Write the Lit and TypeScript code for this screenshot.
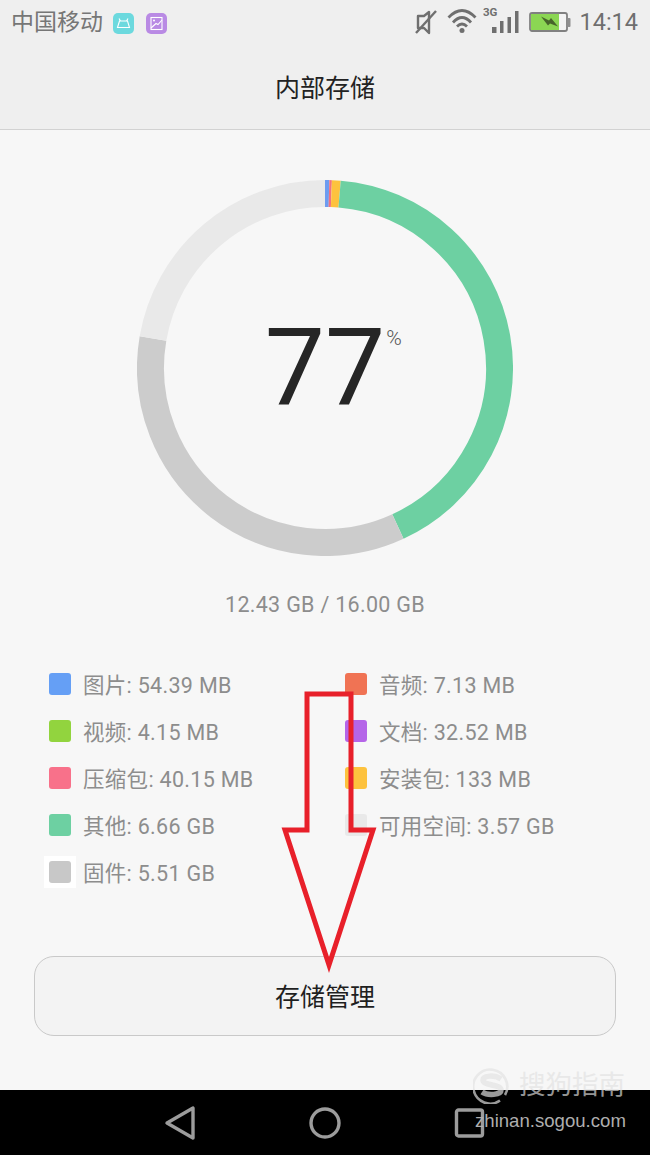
import { LitElement, html, css, svg } from "lit";
import { customElement } from "lit/decorators.js";

const R = 174.5;
const C = 188;
function arc(a0: number, a1: number) {
  const p = (a: number) => {
    const t = (a * Math.PI) / 180;
    return `${(C + R * Math.sin(t)).toFixed(2)} ${(C - R * Math.cos(t)).toFixed(2)}`;
  };
  return `M${p(a0)} A${R} ${R} 0 ${a1 - a0 > 180 ? 1 : 0} 1 ${p(a1)}`;
}

const segments: [number, number, string][] = [
  [0, 1.3, "#6d9cf0"],
  [1.3, 2.1, "#f2727f"],
  [2.1, 4.8, "#fdc23e"],
  [4.8, 155.3, "#6dd0a2"],
  [155.3, 279.7, "#cccccc"],
  [279.7, 360, "#e9e9e9"],
];

const legend: { color: string; label: string; halo?: boolean }[] = [
  { color: "#659ff5", label: "图片: 54.39 MB" },
  { color: "#f07354", label: "音频: 7.13 MB" },
  { color: "#92d43e", label: "视频: 4.15 MB" },
  { color: "#b565e8", label: "文档: 32.52 MB" },
  { color: "#f8718a", label: "压缩包: 40.15 MB" },
  { color: "#fdc23e", label: "安装包: 133 MB" },
  { color: "#6dd0a2", label: "其他: 6.66 GB" },
  { color: "#e9e9e9", label: "可用空间: 3.57 GB" },
  { color: "#c8c8c8", label: "固件: 5.51 GB", halo: true },
];

@customElement("app-root")
export class AppRoot extends LitElement {
  static styles = css`
    :host {
      display: block;
      position: relative;
      width: 650px;
      height: 1155px;
      overflow: hidden;
      background: #f7f7f7;
      font-family: Roboto, "Noto Sans CJK SC", sans-serif;
    }
    .top {
      background: #efefef;
      border-bottom: 1px solid #d2d2d2;
      height: 129px;
      display: flex;
      flex-direction: column;
    }
    .status {
      height: 46px;
      display: flex;
      align-items: center;
      padding: 0 12px;
      color: #757575;
    }
    .carrier {
      font-size: 23px;
      line-height: 46px;
      color: #767676;
      margin-left: -1px;
    }
    .appicon {
      margin-left: 10px;
      display: block;
    }
    .appicon + .appicon {
      margin-left: 12px;
    }
    .spacer {
      flex: 1;
    }
    .sicon {
      display: block;
    }
    .gap-wifi {
      margin-left: 10px;
    }
    .gap-signal {
      margin-left: 6px;
    }
    .gap-battery {
      margin-left: 10px;
    }
    .time {
      font-size: 23.5px;
      margin-left: 8px;
      color: #6f6f6f;
      padding-bottom: 2px;
    }
    .title {
      flex: 1;
      display: flex;
      align-items: center;
      justify-content: center;
      font-size: 25px;
      color: #222;
      padding-bottom: 3px;
    }
    .main {
      height: 960px;
      display: flex;
      flex-direction: column;
      align-items: center;
    }
    .donut {
      margin-top: 50px;
      position: relative;
      width: 376px;
      height: 376px;
      display: flex;
      align-items: center;
      justify-content: center;
    }
    .donut svg {
      position: absolute;
      inset: 0;
    }
    .pct {
      position: relative;
      font-size: 107px;
      font-weight: 400;
      color: #262626;
      line-height: 1;
    }
    .pct small {
      position: absolute;
      left: 100%;
      top: 13px;
      margin-left: 1px;
      font-size: 21px;
      font-weight: 300;
      color: #555;
      line-height: 1;
    }
    .usage {
      margin-top: 36px;
      font-size: 21.5px;
      line-height: 26px;
      color: #8d8d8d;
      letter-spacing: 0.3px;
    }
    .legend {
      margin-top: 42px;
      align-self: flex-start;
      margin-left: 49px;
      display: grid;
      grid-template-columns: 296px 1fr;
      grid-auto-rows: 47px;
    }
    .item {
      display: flex;
      align-items: center;
      gap: 12px;
      font-size: 21.5px;
      color: #8d8d8d;
      letter-spacing: 0.3px;
    }
    .swatch {
      display: block;
      width: 22px;
      height: 22px;
      border-radius: 3px;
    }
    .halo {
      background: #fff;
      padding: 5px;
      margin: -5px;
    }
    .button {
      margin-top: 61px;
      width: 582px;
      height: 80px;
      box-sizing: border-box;
      border: 1.5px solid #c9c9c9;
      border-radius: 20px;
      background: #f3f3f3;
      display: flex;
      align-items: center;
      justify-content: center;
      font-size: 25px;
      color: #1f1f1f;
      padding-bottom: 2px;
    }
    .nav {
      height: 65px;
      background: #000;
      display: flex;
      align-items: center;
      justify-content: center;
      gap: 113px;
    }
    .nav svg {
      display: block;
    }
    .arrow {
      position: absolute;
      left: 0;
      top: 0;
      pointer-events: none;
    }
    .mark {
      position: absolute;
      left: 475px;
      top: 1064px;
      width: 165px;
      color: rgba(225, 225, 225, 0.68);
    }
    .mark-top {
      display: flex;
      align-items: center;
      gap: 8px;
      margin-left: -2px;
      font-size: 26.5px;
      line-height: 42px;
    }
    .mark-url {
      font-family: "Liberation Sans", Arial, sans-serif;
      font-size: 18.6px;
      line-height: 20px;
      margin-top: 5px;
      color: #aeaeae;
      white-space: nowrap;
    }
  `;

  render() {
    return html`
      <div class="top">
        <div class="status">
          <span class="carrier">中国移动</span>
          <svg class="appicon" width="21" height="21" viewBox="0 0 21 21">
            <rect width="21" height="21" rx="5" fill="#6cd9de" />
            <path d="M4.5 14.500 L6.500 8 H14.500 L16.500 14.500 Z M7.500 8 L6 5.500 M13.500 8 L15 5.500" fill="none" stroke="#fff" stroke-width="1.1" />
          </svg>
          <svg class="appicon" width="21" height="21" viewBox="0 0 21 21">
            <rect width="21" height="21" rx="5" fill="#b98ae4" />
            <rect x="5" y="4.500" width="11" height="12" fill="none" stroke="#fff" stroke-width="1.1" />
            <path d="M5 15 L10 10.500 L12 11.500 L16 7" fill="none" stroke="#fff" stroke-width="1.1" />
            <circle cx="8" cy="7.500" r="1" fill="#fff" />
          </svg>
          <span class="spacer"></span>
          <svg class="sicon" width="22" height="46" viewBox="0 0 22 46">
            <path d="M3 16 H9 L14 12 V33 L9 28 H3 Z" fill="none" stroke="#6f6f6f" stroke-width="2.4" stroke-linejoin="round" />
            <path d="M1 33 L21 11" stroke="#6f6f6f" stroke-width="2.4" />
          </svg>
          <svg class="sicon gap-wifi" width="30" height="46" viewBox="0 0 30 46">
            <path d="M1.500 17.500 Q15 3.500 28.500 17.500 M6 22.500 Q15 12.500 24 22.500 M10 26.500 Q15 21.500 20 26.500" fill="none" stroke="#6f6f6f" stroke-width="2.800" />
            <circle cx="15" cy="30.500" r="2.500" fill="#6f6f6f" />
          </svg>
          <svg class="sicon gap-signal" width="36" height="46" viewBox="0 0 36 46">
            <text x="0" y="16" font-family="Roboto, sans-serif" font-size="11.500" font-weight="700" fill="#6f6f6f">3G</text>
            <rect x="9" y="27" width="4.500" height="6" fill="#6f6f6f" />
            <rect x="17" y="21" width="3.500" height="12" fill="#6f6f6f" />
            <rect x="24.500" y="17" width="3.500" height="16" fill="#6f6f6f" />
            <rect x="32" y="11" width="3.500" height="22" fill="#6f6f6f" />
          </svg>
          <svg class="sicon gap-battery" width="42" height="46" viewBox="0 0 42 46">
            <rect x="1" y="13" width="37" height="18" rx="2" fill="#f3f3f3" stroke="#808080" stroke-width="1.800" />
            <rect x="2" y="14" width="28" height="16" fill="#8bd653" />
            <rect x="38.500" y="18" width="3" height="9" rx="1" fill="#8f8f8f" />
            <path d="M12 16.500 L20 20.500 L22 18 L29 26.500 L21 23.500 L19 25.500 Z" fill="#47652b" />
          </svg>
          <span class="time">14:14</span>
        </div>
        <div class="title">内部存储</div>
      </div>

      <div class="main">
        <div class="donut">
          <svg width="376" height="376" viewBox="0 0 376 376">
            ${segments.map(
              ([a0, a1, c]) => svg`<path d=${arc(a0, a1)} fill="none" stroke=${c} stroke-width="27" />`
            )}
          </svg>
          <div class="pct">77<small>%</small></div>
        </div>
        <div class="usage">12.43 GB / 16.00 GB</div>
        <div class="legend">
          ${legend.map(
            (l) => html`<div class="item">
              <span class=${l.halo ? "halo" : ""}>
                <span class="swatch" style="background:${l.color}"></span>
              </span>
              <span>${l.label}</span>
            </div>`
          )}
        </div>
        <div class="button">存储管理</div>
      </div>

      <div class="nav">
        <svg width="32" height="36" viewBox="0 0 32 36">
          <path d="M29 3 V33 L3 18 Z" fill="none" stroke="#9c9c9c" stroke-width="3.400" stroke-linejoin="round" />
        </svg>
        <svg width="32" height="32" viewBox="0 0 32 32">
          <circle cx="16" cy="16" r="14" fill="none" stroke="#9c9c9c" stroke-width="3.400" />
        </svg>
        <svg width="32" height="32" viewBox="0 0 32 32">
          <rect x="2.500" y="3" width="26" height="26" rx="2" fill="none" stroke="#9c9c9c" stroke-width="3.400" />
        </svg>
      </div>

      <svg class="arrow" width="650" height="1155" viewBox="0 0 650 1155">
        <path d="M307 694 H351 V830 H373 L329 965 L285 830 H307 Z" fill="none" stroke="#e8202a" stroke-width="5" stroke-linejoin="miter" />
      </svg>

      <div class="mark">
        <div class="mark-top">
          <svg width="38" height="38" viewBox="0 0 38 38">
            <path d="M32 29 A17 17 0 1 0 27 34.500" fill="none" stroke="currentColor" stroke-width="2.600" />
            <path d="M28 13 C21 8.500 10 9.500 10 14 C10 20 28 18 28 24 C28 29 15 30 9 26" fill="none" stroke="currentColor" stroke-width="5.500" />
          </svg>
          <span>搜狗指南</span>
        </div>
        <div class="mark-url">zhinan.sogou.com</div>
      </div>
    `;
  }
}
